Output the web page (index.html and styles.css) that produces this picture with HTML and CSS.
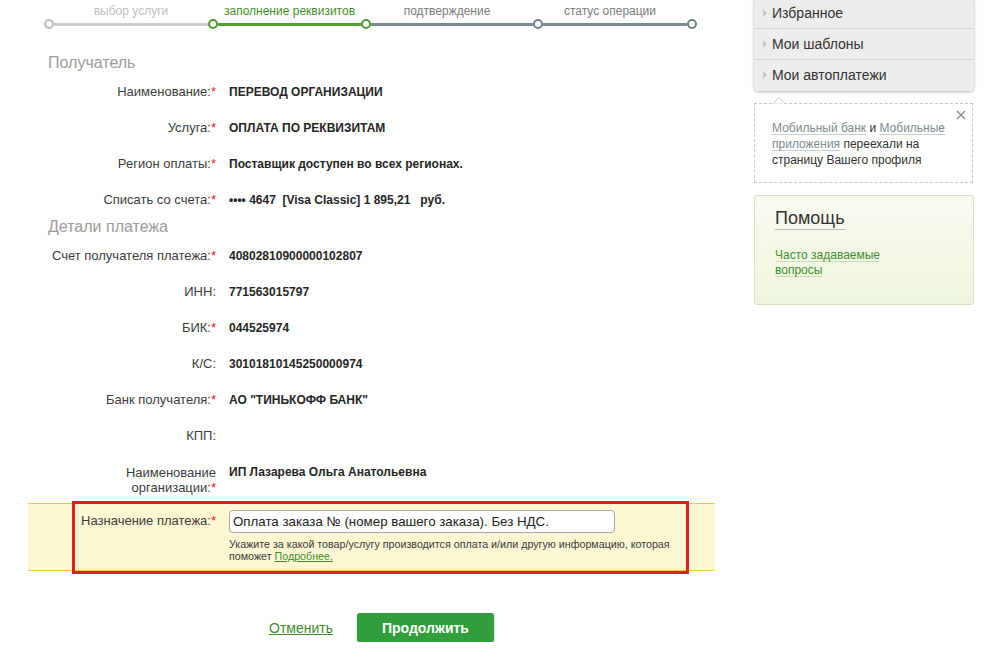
FILE: index.html
```html
<!DOCTYPE html>
<html lang="ru">
<head>
<meta charset="utf-8">
<title>Заполнение реквизитов</title>
<link rel="stylesheet" href="styles.css">
</head>
<body>
<div class="page">
  <main class="main">
    <div class="steps">
      <div class="step-labels">
        <span class="step-label step-done lw1">выбор услуги</span>
        <span class="step-label step-active lw2">заполнение реквизитов</span>
        <span class="step-label step-next lw3">подтверждение</span>
        <span class="step-label step-next lw4">статус операции</span>
      </div>
      <div class="track">
        <span class="dot dot-grey"></span>
        <span class="line line-grey w1"></span>
        <span class="dot dot-green"></span>
        <span class="line line-green w2"></span>
        <span class="dot dot-green"></span>
        <span class="line line-slate w3"></span>
        <span class="dot dot-slate"></span>
        <span class="line line-slate w4"></span>
        <span class="dot dot-slate"></span>
      </div>
    </div>

    <h2 class="section-title first">Получатель</h2>
    <div class="row"><div class="row-label">Наименование:<span class="req">*</span></div><div class="row-value">ПЕРЕВОД ОРГАНИЗАЦИИ</div></div>
    <div class="row"><div class="row-label">Услуга:<span class="req">*</span></div><div class="row-value">ОПЛАТА ПО РЕКВИЗИТАМ</div></div>
    <div class="row"><div class="row-label">Регион оплаты:<span class="req">*</span></div><div class="row-value">Поставщик доступен во всех регионах.</div></div>
    <div class="row"><div class="row-label">Списать со счета:<span class="req">*</span></div><div class="row-value">•••• 4647&nbsp; [Visa Classic] 1 895,21 &nbsp; руб.</div></div>

    <h2 class="section-title">Детали платежа</h2>
    <div class="row"><div class="row-label">Счет получателя платежа:<span class="req">*</span></div><div class="row-value">40802810900000102807</div></div>
    <div class="row"><div class="row-label">ИНН:</div><div class="row-value">771563015797</div></div>
    <div class="row"><div class="row-label">БИК:<span class="req">*</span></div><div class="row-value">044525974</div></div>
    <div class="row"><div class="row-label">К/С:</div><div class="row-value">30101810145250000974</div></div>
    <div class="row"><div class="row-label">Банк получателя:<span class="req">*</span></div><div class="row-value">АО "ТИНЬКОФФ БАНК"</div></div>
    <div class="row"><div class="row-label">КПП:</div><div class="row-value"></div></div>
    <div class="row row-tall"><div class="row-label">Наименование<br>организации:<span class="req">*</span></div><div class="row-value">ИП Лазарева Ольга Анатольевна</div></div>

    <div class="band">
      <div class="band-label">Назначение платежа:<span class="req">*</span></div>
      <div class="band-field">
        <input class="field" type="text" value="Оплата заказа № (номер вашего заказа). Без НДС.">
        <div class="hint">Укажите за какой товар/услугу производится оплата и/или другую информацию, которая поможет <a href="#" class="hint-link">Подробнее.</a></div>
      </div>
      <div class="highlight"></div>
    </div>

    <div class="actions">
      <a href="#" class="cancel">Отменить</a>
      <button class="btn" type="button">Продолжить</button>
    </div>
  </main>

  <aside class="sidebar">
    <nav class="menu">
      <div class="menu-item"><span class="tri"></span>Избранное</div>
      <div class="menu-item"><span class="tri"></span>Мои шаблоны</div>
      <div class="menu-item last"><span class="tri"></span>Мои автоплатежи</div>
    </nav>

    <div class="notice">
      <svg class="notice-arrow" width="14" height="8" viewBox="0 0 14 8"><polyline points="1,7.5 7,1.5 13,7.5" fill="#fff" stroke="#c8c8c8" stroke-width="1"/></svg>
      <svg class="notice-close" width="10" height="10" viewBox="0 0 10 10"><path d="M1 1 L9 9 M9 1 L1 9" stroke="#8a8a8a" stroke-width="1.3"/></svg>
      <a href="#" class="notice-link">Мобильный банк</a> и <a href="#" class="notice-link">Мобильные приложения</a> переехали на страницу Вашего профиля
    </div>

    <div class="help">
      <div class="help-title">Помощь</div>
      <div class="help-links"><a href="#" class="help-link">Часто задаваемые</a><br><a href="#" class="help-link">вопросы</a></div>
    </div>
  </aside>
</div>
</body>
</html>
```

FILE: styles.css
```css
* { box-sizing: border-box; }

body {
  margin: 0;
  background: #fff;
  color: #333;
  font-family: "Liberation Sans", Arial, sans-serif;
}

.page {
  display: flex;
  align-items: flex-start;
}

.main {
  width: 687px;
  margin-left: 28px;
}

/* progress steps */
.step-labels {
  display: flex;
  gap: 10px;
  margin: 4px 0 0 26px;
  height: 15px;
}

.step-label {
  font-size: 12px;
  line-height: 15px;
  text-align: center;
  white-space: nowrap;
}

.step-done { color: #bdbdbd; }
.step-active { color: #3f8f2b; }
.step-next { color: #7b7b7b; }

.lw1 { width: 154px; }
.lw2 { width: 143px; }
.lw3 { width: 152px; }
.lw4 { width: 154px; }

.w1 { width: 154px; }
.w2 { width: 143px; }
.w3 { width: 162px; }
.w4 { width: 144px; }

.track {
  display: flex;
  align-items: center;
  height: 10px;
  margin-left: 16px;
}

.dot {
  flex: none;
  width: 10px;
  height: 10px;
  border-radius: 50%;
  border: 2px solid;
  background: #fff;
}

.dot-grey { border-color: #bdbdbd; }
.dot-green { border-color: #4b9b2f; }
.dot-slate { border-color: #6f7f88; }

.line {
  flex: none;
  height: 3px;
}

.line-grey { background: #cccccc; }
.line-green { background: #4f9f34; }
.line-slate { background: #7a8a93; }

/* sections */
.section-title {
  margin: 0 0 0 20px;
  font-size: 16px;
  font-weight: normal;
  line-height: 20px;
  color: #9c9c9c;
}

.section-title.first { margin-top: 24px; }

.row {
  display: flex;
  padding: 12px 0 10px;
  line-height: 14px;
}

.row-tall {
  line-height: 15px;
  padding-bottom: 8px;
}

.row-label {
  width: 188px;
  flex: none;
  text-align: right;
  font-size: 13px;
  color: #3c3c3c;
}

.row-value {
  margin-left: 13px;
  font-size: 12px;
  font-weight: bold;
  color: #262626;
}

.req {
  color: #e2261d;
}

/* highlighted band */
.band {
  position: relative;
  display: flex;
  padding: 6px 0 8px;
  background: #fdf7d4;
  border-top: 1px solid #f3c94b;
  border-bottom: 1px solid #f3c94b;
}

.band-label {
  width: 188px;
  flex: none;
  text-align: right;
  font-size: 13px;
  line-height: 22px;
  color: #3c3c3c;
}

.band-field {
  margin-left: 13px;
}

.field {
  display: block;
  width: 386px;
  height: 23px;
  margin: 0;
  padding: 0 3px;
  border: 1px solid #a8a8a8;
  border-radius: 4px;
  background: #fff;
  font-family: "Liberation Sans", Arial, sans-serif;
  font-size: 13.3px;
  color: #222;
  outline: none;
}

.hint {
  width: 450px;
  margin-top: 5px;
  font-size: 10.7px;
  line-height: 12px;
  color: #3a3a3a;
}

.hint-link {
  color: #3d8c2a;
}

.highlight {
  position: absolute;
  left: 44px;
  right: 26px;
  top: -3px;
  bottom: -4px;
  border: 3px solid #e1201c;
  pointer-events: none;
}

/* actions */
.actions {
  display: flex;
  align-items: center;
  margin-top: 42px;
  padding-left: 241px;
}

.cancel {
  font-size: 14px;
  color: #3d8c2a;
  text-decoration: underline;
}

.btn {
  margin-left: 24px;
  width: 137px;
  height: 29px;
  border: none;
  border-radius: 3px;
  background: #2f9e3b;
  box-shadow: 0 1px 2px rgba(0, 0, 0, 0.35);
  color: #fff;
  font-family: "Liberation Sans", Arial, sans-serif;
  font-size: 14px;
  font-weight: bold;
}

/* sidebar */
.sidebar {
  width: 220px;
  flex: none;
  margin-left: 39px;
  margin-top: -2px;
}

.menu {
  background: #ededed;
  border-radius: 0 0 4px 4px;
  box-shadow: 0 1px 3px rgba(0, 0, 0, 0.3);
}

.menu-item {
  display: flex;
  align-items: center;
  height: 31px;
  padding-left: 9px;
  padding-bottom: 1px;
  border-bottom: 1px solid #d6d6d6;
  font-size: 14px;
  color: #333;
}

.menu-item.last { border-bottom: none; }

.tri {
  width: 0;
  height: 0;
  margin-right: 5px;
  border-left: 4px solid #c9c9c9;
  border-top: 4px solid transparent;
  border-bottom: 4px solid transparent;
}

.notice {
  position: relative;
  width: 219px;
  height: 80px;
  margin-top: 12px;
  padding: 16px 18px 0 17px;
  border: 1px dashed #c6c6c6;
  font-size: 12px;
  line-height: 16px;
  color: #333;
}

.notice-arrow {
  position: absolute;
  left: 17px;
  top: -8px;
}

.notice-close {
  position: absolute;
  right: 6px;
  top: 6px;
}

.notice-link {
  color: #7e8b8b;
  text-decoration: underline;
  text-decoration-color: #c7d0d0;
  text-underline-offset: 2px;
}

.help {
  height: 110px;
  margin-top: 12px;
  padding: 11px 20px 0 20px;
  border: 1px solid #d8e0c6;
  border-radius: 3px;
  background: linear-gradient(#f9fbf1, #eef5dc);
}

.help-title {
  display: inline-block;
  font-size: 18px;
  line-height: 22px;
  color: #333;
  border-bottom: 1px solid #b8b8b8;
}

.help-links {
  margin-top: 18px;
  font-size: 12px;
  line-height: 15px;
}

.help-link {
  color: #3f8f2b;
  text-decoration: underline;
  text-decoration-color: #c6dcb4;
  text-underline-offset: 2px;
}
```
